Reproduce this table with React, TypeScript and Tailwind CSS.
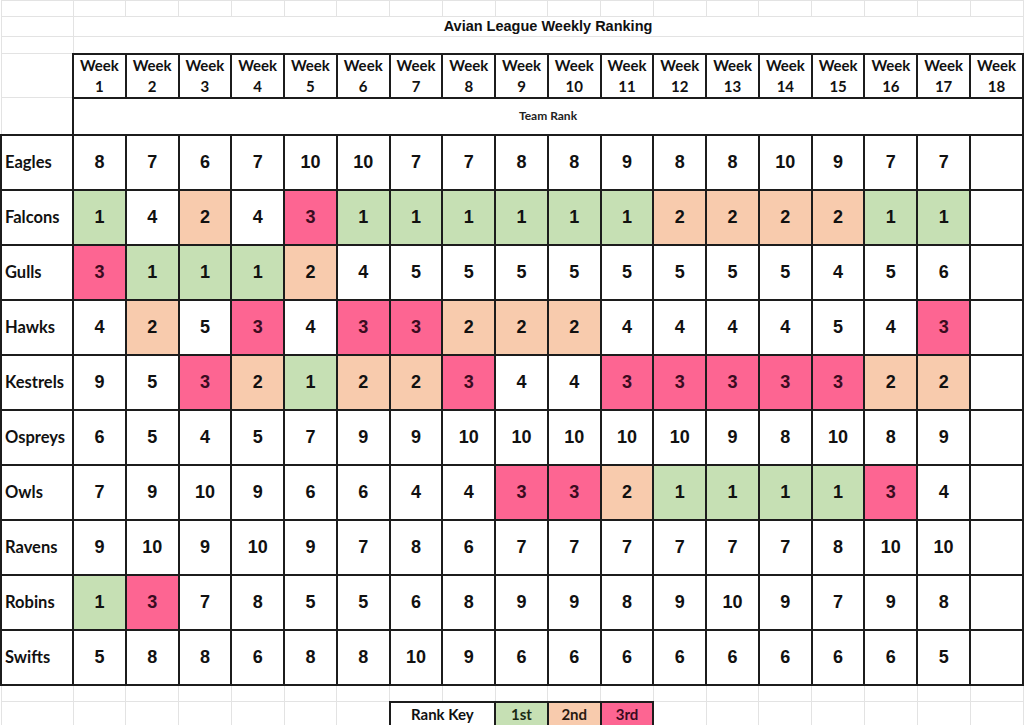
const teams: { name: string; ranks: number[] }[] = [
  { name: 'Eagles', ranks: [8, 7, 6, 7, 10, 10, 7, 7, 8, 8, 9, 8, 8, 10, 9, 7, 7] },
  { name: 'Falcons', ranks: [1, 4, 2, 4, 3, 1, 1, 1, 1, 1, 1, 2, 2, 2, 2, 1, 1] },
  { name: 'Gulls', ranks: [3, 1, 1, 1, 2, 4, 5, 5, 5, 5, 5, 5, 5, 5, 4, 5, 6] },
  { name: 'Hawks', ranks: [4, 2, 5, 3, 4, 3, 3, 2, 2, 2, 4, 4, 4, 4, 5, 4, 3] },
  { name: 'Kestrels', ranks: [9, 5, 3, 2, 1, 2, 2, 3, 4, 4, 3, 3, 3, 3, 3, 2, 2] },
  { name: 'Ospreys', ranks: [6, 5, 4, 5, 7, 9, 9, 10, 10, 10, 10, 10, 9, 8, 10, 8, 9] },
  { name: 'Owls', ranks: [7, 9, 10, 9, 6, 6, 4, 4, 3, 3, 2, 1, 1, 1, 1, 3, 4] },
  { name: 'Ravens', ranks: [9, 10, 9, 10, 9, 7, 8, 6, 7, 7, 7, 7, 7, 7, 8, 10, 10] },
  { name: 'Robins', ranks: [1, 3, 7, 8, 5, 5, 6, 8, 9, 9, 8, 9, 10, 9, 7, 9, 8] },
  { name: 'Swifts', ranks: [5, 8, 8, 6, 8, 8, 10, 9, 6, 6, 6, 6, 6, 6, 6, 6, 5] },
];

const weeks = Array.from({ length: 18 }, (_, i) => i + 1);

// fill colour for podium places
function rankClass(rank: number) {
  if (rank === 1) return 'bg-[#c6e0b4] text-[#111]';
  if (rank === 2) return 'bg-[#f8cbad] text-[#111]';
  if (rank === 3) return 'bg-[#fd6592] text-[#3b0b1f]';
  return 'bg-white text-[#111]';
}

const grid = 'border border-[#e3e3e3]';
const cell = 'border-2 border-[#1c1c1c]';
const calibri = "font-['Lato','Noto_Sans',sans-serif]";
const arial = "font-['Liberation_Sans',Arial,sans-serif]";

export default function App() {
  return (
    <div className="h-[725px] w-[1024px] overflow-hidden bg-white">
      <table className="w-[1024px] table-fixed border-collapse">
        <colgroup>
          <col className="w-[72px]" />
          {weeks.map((w) => (
            <col key={w} />
          ))}
        </colgroup>
        <tbody>
          {/* top spreadsheet rows */}
          <tr className="h-[16px]">
            <td className={grid} />
            {weeks.map((w) => (
              <td key={w} className={grid} />
            ))}
          </tr>
          <tr className="h-[20px]">
            <td className={grid} />
            <td
              colSpan={18}
              className={`${grid} p-0 text-center align-middle text-[14.5px] font-bold leading-none text-[#111] ${arial}`}
            >
              Avian League Weekly Ranking
            </td>
          </tr>
          <tr className="h-[17px]">
            <td className={grid} />
            <td colSpan={18} className={grid} />
          </tr>

          {/* week headers */}
          <tr className="h-[44px]">
            <td className={grid} />
            {weeks.map((w) => (
              <td
                key={w}
                className={`${cell} p-0 text-center align-middle text-[15px] font-bold leading-[21px] text-[#111] ${calibri}`}
              >
                Week
                <br />
                {w}
              </td>
            ))}
          </tr>
          <tr className="h-[37px]">
            <td className={grid} />
            <td
              colSpan={18}
              className={`${cell} p-0 text-center align-middle text-[12px] font-bold text-[#222] ${calibri}`}
            >
              Team Rank
            </td>
          </tr>

          {/* team rows */}
          {teams.map((team) => (
            <tr key={team.name} className="h-[55px]">
              <td
                className={`${cell} px-[3px] text-left align-middle text-[16.5px] font-bold text-[#111] ${calibri}`}
              >
                {team.name}
              </td>
              {weeks.map((w, i) => {
                const rank = team.ranks[i];
                return (
                  <td
                    key={w}
                    className={`${cell} p-0 text-center align-middle text-[18px] font-bold ${arial} ${
                      rank ? rankClass(rank) : 'bg-white'
                    }`}
                  >
                    {rank ?? ''}
                  </td>
                );
              })}
            </tr>
          ))}

          {/* spacer + key */}
          <tr className="h-[17px]">
            <td className={grid} />
            {weeks.map((w) => (
              <td key={w} className={grid} />
            ))}
          </tr>
          <tr className="h-[26px]">
            <td className={grid} />
            {weeks.slice(0, 6).map((w) => (
              <td key={w} className={grid} />
            ))}
            <td
              colSpan={2}
              className={`${cell} p-0 text-center align-middle text-[15px] font-bold text-[#111] ${calibri}`}
            >
              Rank Key
            </td>
            <td className={`${cell} bg-[#c6e0b4] p-0 text-center align-middle text-[15px] font-bold text-[#1a2a12] ${calibri}`}>
              1st
            </td>
            <td className={`${cell} bg-[#f8cbad] p-0 text-center align-middle text-[15px] font-bold text-[#2a1a10] ${calibri}`}>
              2nd
            </td>
            <td className={`${cell} bg-[#fd6592] p-0 text-center align-middle text-[15px] font-bold text-[#3b0b1f] ${calibri}`}>
              3rd
            </td>
            {weeks.slice(11).map((w) => (
              <td key={w} className={grid} />
            ))}
          </tr>
        </tbody>
      </table>
    </div>
  );
}
